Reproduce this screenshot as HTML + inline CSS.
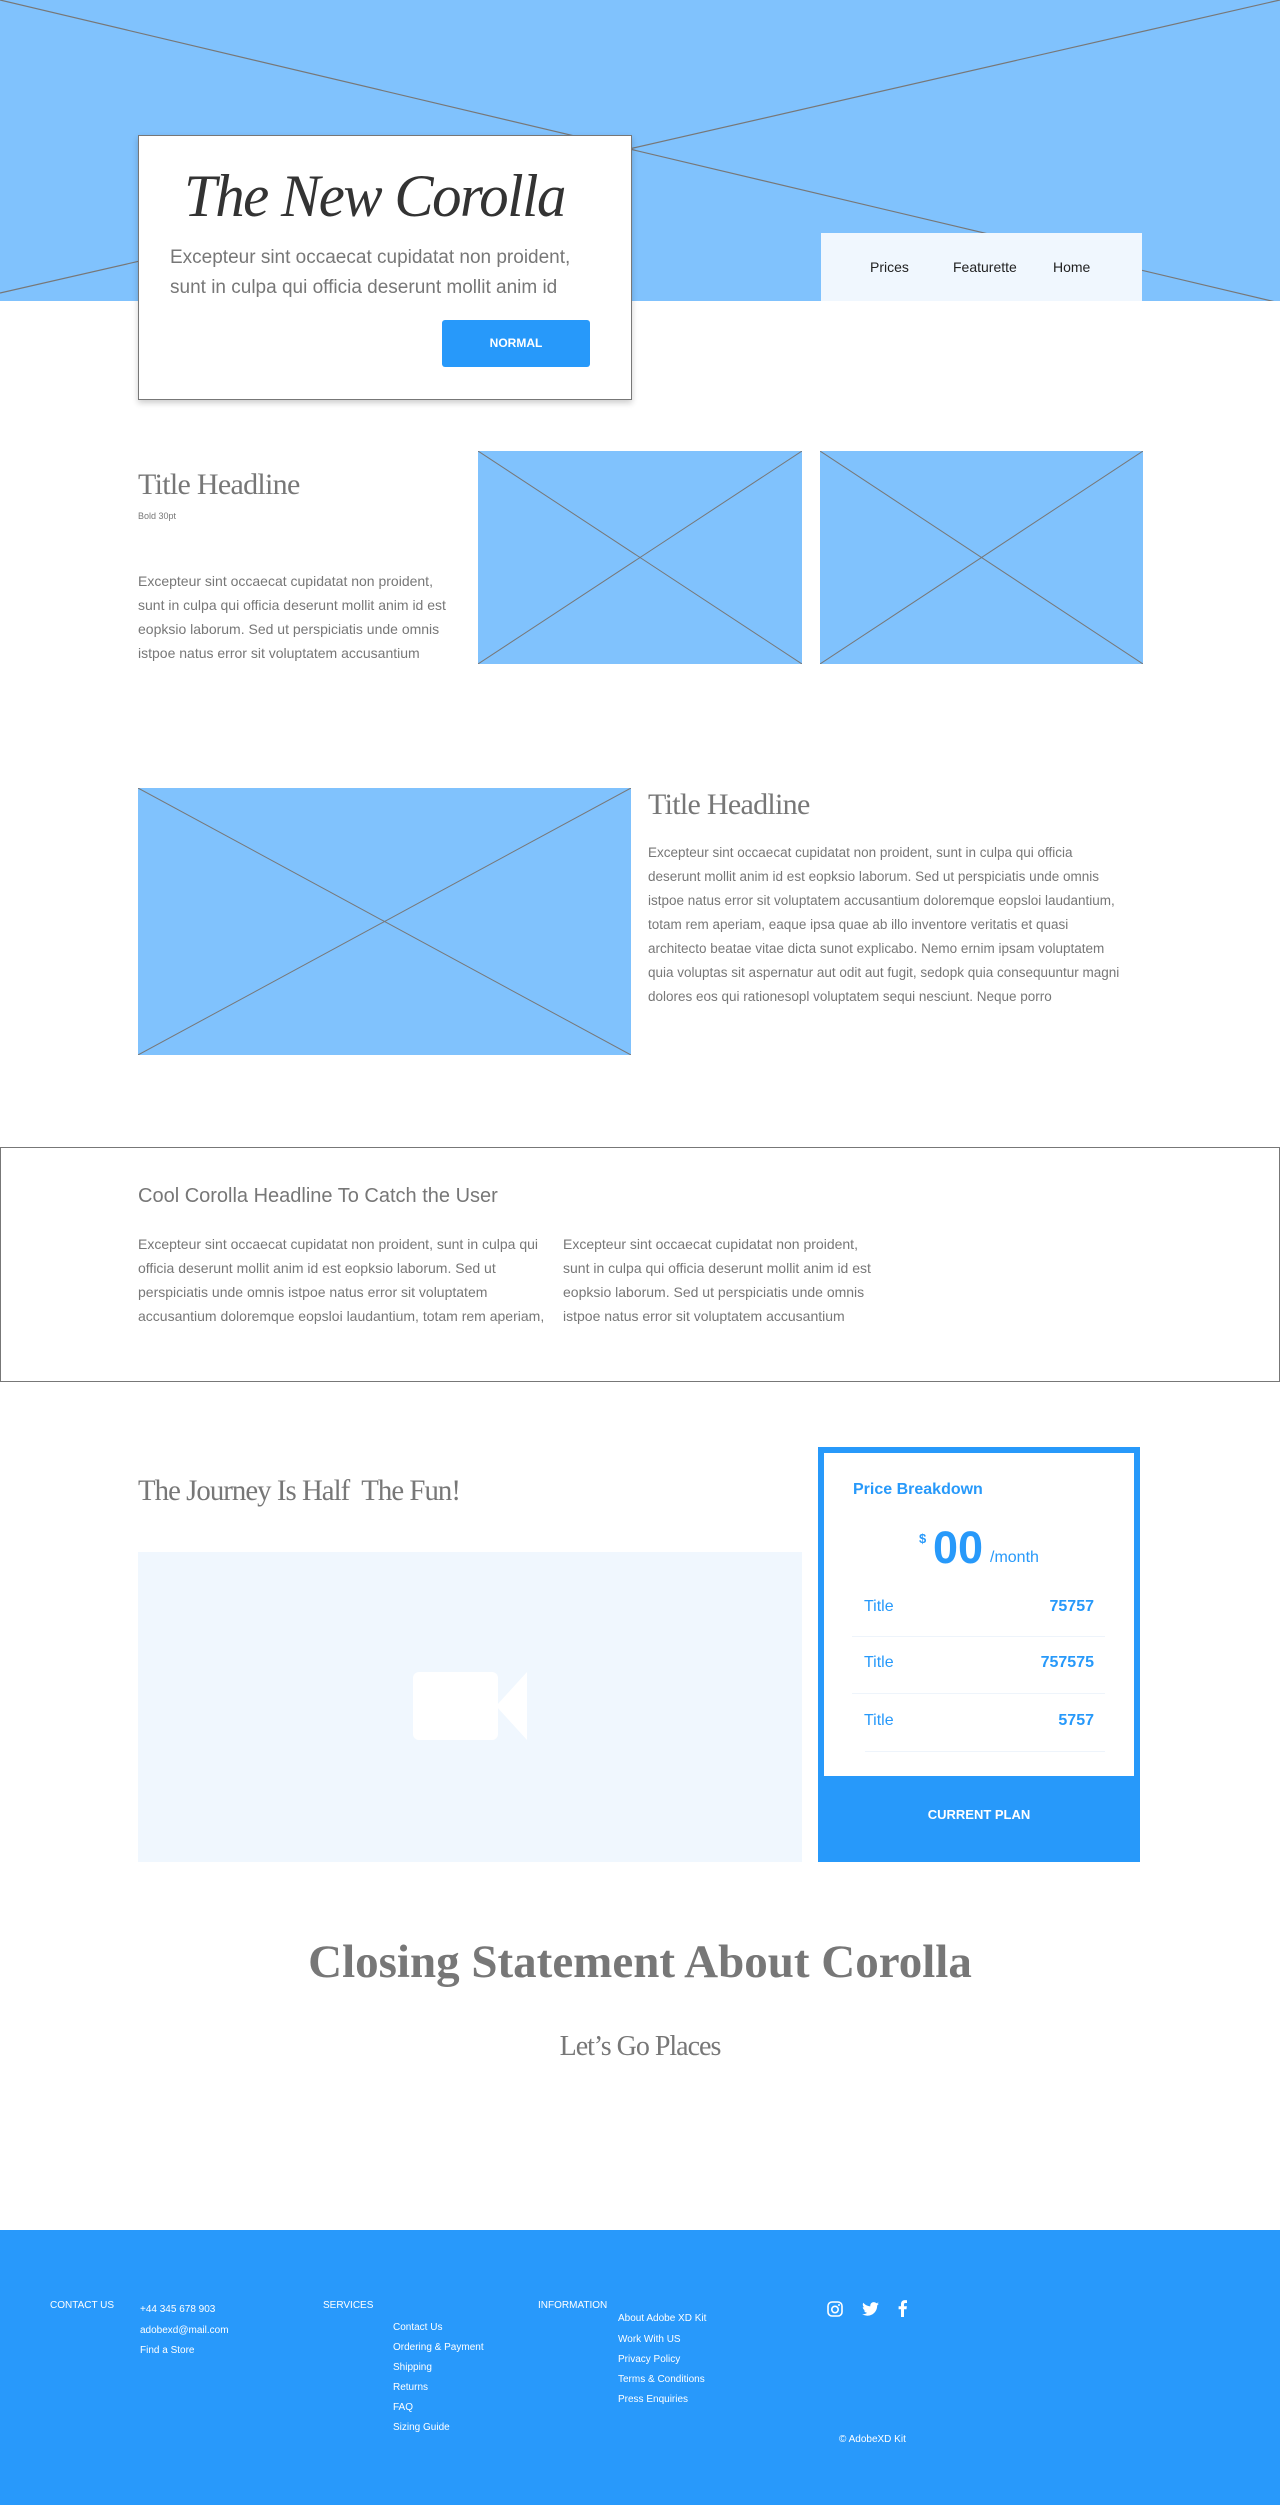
<!DOCTYPE html>
<html><head><meta charset="utf-8"><style>
*{margin:0;padding:0;box-sizing:border-box}
body{width:1280px;height:2505px;position:relative;background:#fff;font-family:"Liberation Sans",Arial,sans-serif;overflow:hidden}
.a{position:absolute;white-space:nowrap}
.ph{position:absolute;background:#80c2fd}
.ph svg{position:absolute;left:0;top:0;width:100%;height:100%}
.p{color:#777;font-size:14px;line-height:24px}
.serif{font-family:"Liberation Serif",serif}
.ft{color:#fff;font-size:10px}
.b{color:#2799fa;font-size:16px}
</style></head><body>
<div class="ph" style="left:0;top:0;width:1280px;height:301px">
<svg viewBox="0 0 1280 301" preserveAspectRatio="none"><line x1="0" y1="0" x2="1280" y2="303" stroke="#777" stroke-width="1.2"/><line x1="0" y1="293" x2="1280" y2="0" stroke="#777" stroke-width="1.2"/></svg>
</div>
<div class="a" style="left:821px;top:233px;width:321px;height:68px;background:#f0f7fe"></div>
<div class="a" style="left:870px;top:259px;font-size:14px;color:#222">Prices</div>
<div class="a" style="left:953px;top:259px;font-size:14px;color:#222">Featurette</div>
<div class="a" style="left:1053px;top:259px;font-size:14px;color:#222">Home</div>

<div class="a" style="left:138px;top:135px;width:494px;height:265px;background:#fff;border:1px solid #777;box-shadow:0 3px 6px rgba(0,0,0,.2)"></div>
<div class="a serif" style="left:184px;top:162px;font-size:60px;font-style:italic;color:#333;letter-spacing:-1.5px;transform:scaleX(.98);transform-origin:left">The New Corolla</div>
<div class="a" style="left:170px;top:243px;font-size:19px;line-height:30px;color:#777">Excepteur sint occaecat cupidatat non proident,<br>sunt in culpa qui officia deserunt mollit anim id</div>
<div class="a" style="left:442px;top:320px;width:148px;height:47px;background:#2799fa;border-radius:3px;color:#fff;font-weight:bold;font-size:12px;text-align:center;line-height:47px">NORMAL</div>

<div class="a serif" style="left:138px;top:468px;font-size:30px;color:#777;letter-spacing:-.7px">Title Headline</div>
<div class="a" style="left:138px;top:511px;font-size:9px;color:#777">Bold 30pt</div>
<div class="a p" style="left:138px;top:569px">Excepteur sint occaecat cupidatat non proident,<br>sunt in culpa qui officia deserunt mollit anim id est<br>eopksio laborum. Sed ut perspiciatis unde omnis<br>istpoe natus error sit voluptatem accusantium</div>
<div class="ph" style="left:478px;top:451px;width:324px;height:213px"><svg viewBox="0 0 324 213" preserveAspectRatio="none"><line x1="0" y1="0" x2="324" y2="213" stroke="#777"/><line x1="0" y1="213" x2="324" y2="0" stroke="#777"/></svg></div>
<div class="ph" style="left:820px;top:451px;width:323px;height:213px"><svg viewBox="0 0 323 213" preserveAspectRatio="none"><line x1="0" y1="0" x2="323" y2="213" stroke="#777"/><line x1="0" y1="213" x2="323" y2="0" stroke="#777"/></svg></div>

<div class="ph" style="left:138px;top:788px;width:493px;height:267px"><svg viewBox="0 0 493 267" preserveAspectRatio="none"><line x1="0" y1="0" x2="493" y2="267" stroke="#777"/><line x1="0" y1="267" x2="493" y2="0" stroke="#777"/></svg></div>
<div class="a serif" style="left:648px;top:788px;font-size:30px;color:#777;letter-spacing:-.7px">Title Headline</div>
<div class="a p" style="left:648px;top:841px;font-size:13.5px">Excepteur sint occaecat cupidatat non proident, sunt in culpa qui officia<br>deserunt mollit anim id est eopksio laborum. Sed ut perspiciatis unde omnis<br>istpoe natus error sit voluptatem accusantium doloremque eopsloi laudantium,<br>totam rem aperiam, eaque ipsa quae ab illo inventore veritatis et quasi<br>architecto beatae vitae dicta sunot explicabo. Nemo ernim ipsam voluptatem<br>quia voluptas sit aspernatur aut odit aut fugit, sedopk quia consequuntur magni<br>dolores eos qui rationesopl voluptatem sequi nesciunt. Neque porro</div>

<div class="a" style="left:0;top:1147px;width:1280px;height:235px;border:1px solid #777"></div>
<div class="a" style="left:138px;top:1185px;font-size:20px;color:#777">Cool Corolla Headline To Catch the User</div>
<div class="a p" style="left:138px;top:1232px">Excepteur sint occaecat cupidatat non proident, sunt in culpa qui<br>officia deserunt mollit anim id est eopksio laborum. Sed ut<br>perspiciatis unde omnis istpoe natus error sit voluptatem<br>accusantium doloremque eopsloi laudantium, totam rem aperiam,</div>
<div class="a p" style="left:563px;top:1232px">Excepteur sint occaecat cupidatat non proident,<br>sunt in culpa qui officia deserunt mollit anim id est<br>eopksio laborum. Sed ut perspiciatis unde omnis<br>istpoe natus error sit voluptatem accusantium</div>

<div class="a serif" style="left:138px;top:1474px;font-size:30px;color:#777;letter-spacing:-1px;transform:scaleX(.96);transform-origin:left">The Journey Is Half&nbsp; The Fun!</div>
<div class="a" style="left:138px;top:1552px;width:664px;height:310px;background:#f0f7fe"></div>
<svg class="a" style="left:410px;top:1668px" width="120" height="76"><rect x="3" y="4" width="85" height="68" rx="6" fill="#fff"/><polygon points="86,38 117,4 117,72" fill="#fff"/></svg>

<div class="a" style="left:818px;top:1447px;width:322px;height:415px;background:#2799fa"></div>
<div class="a" style="left:824px;top:1453px;width:310px;height:323px;background:#fff"></div>
<div class="a" style="left:853px;top:1481px;font-size:16px;font-weight:bold;color:#2799fa">Price Breakdown</div>
<div class="a" style="left:919px;top:1531px;font-size:13px;font-weight:bold;color:#2799fa">$</div>
<div class="a" style="left:933px;top:1524px;font-size:45px;font-weight:bold;color:#2799fa;line-height:48px">00</div>
<div class="a b" style="left:990px;top:1549px">/month</div>
<div class="a b" style="left:864px;top:1598px">Title</div>
<div class="a b" style="left:994px;top:1598px;width:100px;text-align:right;font-weight:bold">75757</div>
<div class="a" style="left:852px;top:1636px;width:253px;height:1px;background:#eef4fb"></div>
<div class="a b" style="left:864px;top:1654px">Title</div>
<div class="a b" style="left:994px;top:1654px;width:100px;text-align:right;font-weight:bold">757575</div>
<div class="a" style="left:852px;top:1693px;width:253px;height:1px;background:#eef4fb"></div>
<div class="a b" style="left:864px;top:1712px">Title</div>
<div class="a b" style="left:994px;top:1712px;width:100px;text-align:right;font-weight:bold">5757</div>
<div class="a" style="left:865px;top:1751px;width:240px;height:1px;background:#eef4fb"></div>
<div class="a" style="left:818px;top:1807px;width:322px;text-align:center;font-size:13px;font-weight:bold;color:#fff">CURRENT PLAN</div>

<div class="a serif" style="left:0;top:1935px;width:1280px;text-align:center;font-size:47px;font-weight:bold;color:#777">Closing Statement About Corolla</div>
<div class="a serif" style="left:0;top:2031px;width:1280px;text-align:center;font-size:28px;color:#777;letter-spacing:-1px">Let’s Go Places</div>

<div class="a" style="left:0;top:2230px;width:1280px;height:275px;background:#2899fb"></div>
<div class="a ft" style="left:50px;top:2300px">CONTACT US</div>
<div class="a ft" style="left:140px;top:2304px">+44 345 678 903</div>
<div class="a ft" style="left:140px;top:2325px">adobexd@mail.com</div>
<div class="a ft" style="left:140px;top:2345px">Find a Store</div>
<div class="a ft" style="left:323px;top:2300px">SERVICES</div>
<div class="a ft" style="left:393px;top:2322px">Contact Us</div>
<div class="a ft" style="left:393px;top:2342px">Ordering &amp; Payment</div>
<div class="a ft" style="left:393px;top:2362px">Shipping</div>
<div class="a ft" style="left:393px;top:2382px">Returns</div>
<div class="a ft" style="left:393px;top:2402px">FAQ</div>
<div class="a ft" style="left:393px;top:2422px">Sizing Guide</div>
<div class="a ft" style="left:538px;top:2300px">INFORMATION</div>
<div class="a ft" style="left:618px;top:2313px">About Adobe XD Kit</div>
<div class="a ft" style="left:618px;top:2334px">Work With US</div>
<div class="a ft" style="left:618px;top:2354px">Privacy Policy</div>
<div class="a ft" style="left:618px;top:2374px">Terms &amp; Conditions</div>
<div class="a ft" style="left:618px;top:2394px">Press Enquiries</div>
<svg class="a" style="left:827px;top:2301px" width="16" height="16" viewBox="0 0 16 16"><rect x="1" y="1" width="14" height="14" rx="4" fill="none" stroke="#fff" stroke-width="1.6"/><circle cx="8" cy="8.5" r="3.2" fill="none" stroke="#fff" stroke-width="1.6"/><circle cx="12" cy="4" r="1" fill="#fff"/></svg>
<svg class="a" style="left:862px;top:2302px" width="17" height="14" viewBox="0 0 24 20"><path d="M24 2.4c-.9.4-1.8.6-2.8.8 1-.6 1.800-1.6 2.2-2.7-1 .6-2 1-3.1 1.2C19.3.7 18 .1 16.6.1c-2.7 0-4.9 2.2-4.9 4.9 0 .4 0 .8.1 1.1C7.7 5.900 4.100 4 1.7 1 1.2 1.8 1 2.6 1 3.5c0 1.7.9 3.2 2.2 4.1-.8 0-1.6-.2-2.2-.6v.1c0 2.4 1.7 4.4 3.9 4.8-.4.1-.8.2-1.3.2-.3 0-.6 0-.9-.1.6 2 2.4 3.4 4.600 3.4-1.7 1.3-3.8 2.1-6.1 2.100-.4 0-.8 0-1.2-.1 2.2 1.4 4.8 2.2 7.5 2.2 9.1 0 14-7.5 14-14v-.6c1-.7 1.8-1.6 2.5-2.6z" fill="#fff"/></svg>
<svg class="a" style="left:898px;top:2300px" width="9" height="17" viewBox="0 0 9 17"><path d="M6 17V9.3h2.5l.4-3H6V4.5c0-.9.3-1.5 1.5-1.5H9V.3C8.7.2 7.8.1 6.8.1 4.6.1 3 1.5 3 4v2.3H.6v3H3V17z" fill="#fff"/></svg>
<div class="a ft" style="left:839px;top:2434px">© AdobeXD Kit</div>
</body></html>
